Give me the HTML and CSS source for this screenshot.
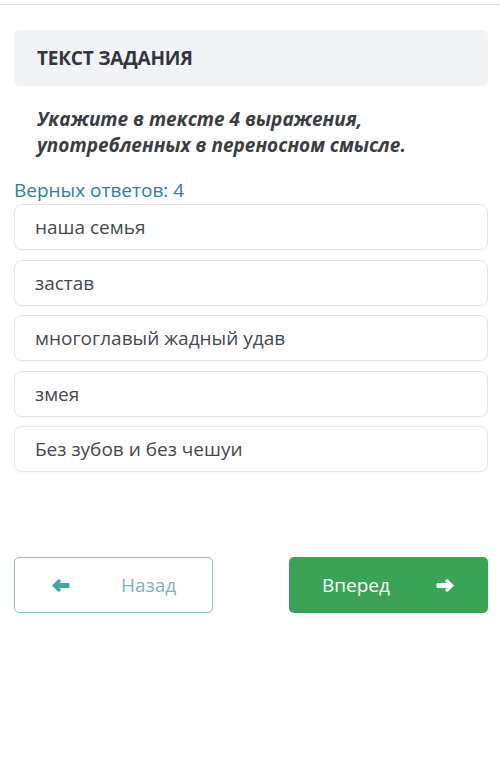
FILE: index.html
```html
<!DOCTYPE html>
<html lang="ru">
<head>
<meta charset="utf-8">
<link rel="stylesheet" href="styles.css">
</head>
<body>
<div class="topline"></div>
<main class="page">
  <div class="task-head">ТЕКСТ ЗАДАНИЯ</div>
  <p class="question">Укажите в тексте 4 выражения, употребленных в переносном смысле.</p>
  <div class="count">Верных ответов: 4</div>
  <ul class="answers">
    <li class="answer">наша семья</li>
    <li class="answer">застав</li>
    <li class="answer">многоглавый жадный удав</li>
    <li class="answer">змея</li>
    <li class="answer">Без зубов и без чешуи</li>
  </ul>
  <div class="nav">
    <button class="btn btn-back">
      <svg class="ico" viewBox="0 0 19 15" width="19" height="15"><path d="M1 7.5 L7 1.5 Q7.8 0.8 8.6 1.5 L9.6 2.5 Q10.3 3.3 9.6 4.1 L8.2 5 H17.3 Q18.5 5 18.5 6.2 V8.8 Q18.5 10 17.3 10 H8.2 L9.6 10.9 Q10.3 11.7 9.6 12.5 L8.6 13.5 Q7.8 14.2 7 13.5 Z" fill="currentColor"/></svg>
      <span>Назад</span>
    </button>
    <button class="btn btn-next">
      <span>Вперед</span>
      <svg class="ico" viewBox="0 0 19 15" width="19" height="15"><path d="M18 7.5 L12 1.5 Q11.2 0.8 10.4 1.5 L9.4 2.5 Q8.7 3.3 9.4 4.1 L10.8 5 H1.7 Q0.5 5 0.5 6.2 V8.8 Q0.5 10 1.7 10 H10.8 L9.4 10.9 Q8.7 11.7 9.4 12.5 L10.4 13.5 Q11.2 14.2 12 13.5 Z" fill="currentColor"/></svg>
    </button>
  </div>
</main>
</body>
</html>
```
FILE: styles.css
```css
html, body {
  margin: 0;
  padding: 0;
  background: #ffffff;
  font-family: "Open Sans", "Noto Sans", sans-serif;
}
.topline {
  height: 4px;
  border-bottom: 1px solid #e4e6ea;
}
.page {
  padding: 25px 12px 0 14px;
}
.task-head {
  background: #f1f3f7;
  border-radius: 6px;
  height: 56px;
  display: flex;
  align-items: center;
  padding-left: 23px;
  font-size: 19px;
  font-weight: 700;
  color: #33363b;
  letter-spacing: -0.2px;
}
.question {
  margin: 20px 30px 0 23px;
  font-size: 19px;
  line-height: 26px;
  font-weight: 700;
  font-style: italic;
  color: #3a3d42;
}
.count {
  margin-top: 20px;
  font-size: 19px;
  line-height: 24px;
  color: #2f7f97;
}
.answers {
  list-style: none;
  margin: 2px 0 0;
  padding: 0;
  display: flex;
  flex-direction: column;
  gap: 9.5px;
}
.answer {
  height: 44px;
  border: 1px solid #e3e5e8;
  border-radius: 8px;
  display: flex;
  align-items: center;
  padding-left: 20px;
  font-size: 19px;
  color: #45484c;
  box-shadow: 0 1px 2px rgba(0,0,0,0.04);
}
.nav {
  margin-top: 85px;
  display: flex;
  justify-content: space-between;
}
.btn {
  width: 199px;
  height: 56px;
  border-radius: 5px;
  display: flex;
  align-items: center;
  font-family: inherit;
  font-size: 19px;
  cursor: pointer;
  box-sizing: border-box;
}
.btn-back {
  background: #fff;
  border: 1px solid #8cc6c7;
  color: #7cb4b9;
  padding-left: 36px;
  gap: 51px;
}
.btn-back .ico { color: #3aa9a4; }
.btn-next {
  background: #39a455;
  border: none;
  color: #ffffff;
  padding-left: 33px;
  gap: 46px;
}
.ico { display: block; flex: none; }
```
